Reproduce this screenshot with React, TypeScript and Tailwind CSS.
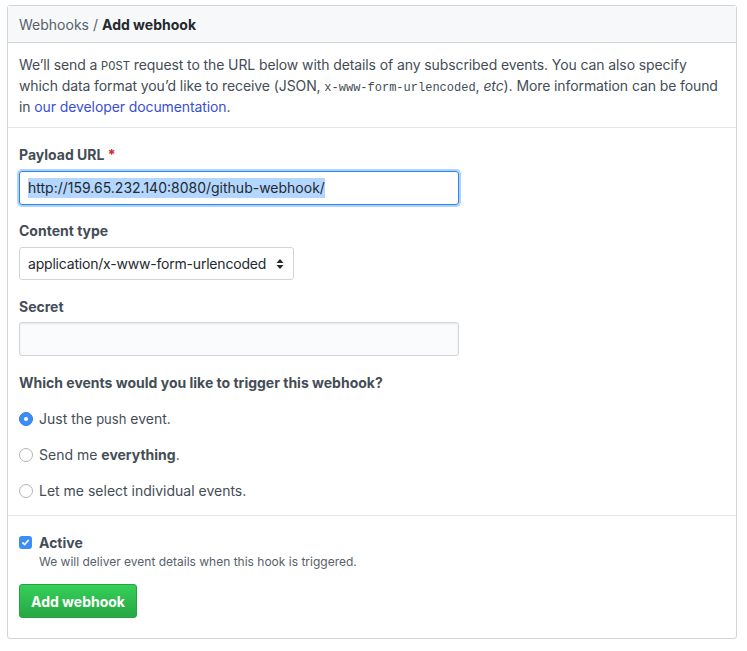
import React from 'react';

const font = { fontFamily: '"Inter", "Liberation Sans", Arial, sans-serif' };

function Radio({ checked }: { checked?: boolean }) {
  if (checked) {
    return (
      <span className="w-[14px] h-[14px] rounded-full bg-[#3b8ef5] border border-[#2f7de6] flex items-center justify-center shrink-0">
        <span className="w-[4px] h-[4px] rounded-full bg-white" />
      </span>
    );
  }
  return <span className="w-[14px] h-[14px] rounded-full bg-white border border-[#b5b5b5] shrink-0" />;
}

export default function App() {
  return (
    <div className="min-h-screen bg-white pt-[5px] pl-[7px]" style={font}>
      <div className="w-[730px] border border-[#d1d5da] rounded-[3px] text-[14px] text-[#24292e]">
        <div className="h-[37px] bg-[#f6f8fa] border-b border-[#d1d5da] px-[11px] flex items-center">
          <span className="text-[#586069]">Webhooks</span>
          <span className="text-[#586069] mx-[4px]">/</span>
          <span className="font-bold">Add webhook</span>
        </div>

        <p className="px-[11px] pt-[11px] pb-[10px] leading-[21px] text-[#444d56] border-b border-[#e1e4e8] whitespace-nowrap tracking-[-0.1px]">
          We’ll send a <code className="text-[12px] leading-none tracking-normal font-['Liberation_Mono',monospace]">POST</code> request to the URL below with details of any subscribed events. You can also specify
          <br />
          which data format you’d like to receive (JSON, <code className="text-[12px] leading-none tracking-normal font-['Liberation_Mono',monospace]">x-www-form-urlencoded</code>, <em>etc</em>). More information can be found
          <br />
          in <a className="text-[#3b4fd3]">our developer documentation</a>.
        </p>

        <div className="px-[11px] pt-[16px] pb-[14px] border-b border-[#e1e4e8]">
          <div className="font-bold leading-[21px] text-[#444d56]">
            Payload URL <span className="text-[#cb2431]">*</span>
          </div>
          <div className="mt-[6px] w-[440px] h-[34px] rounded-[3px] border border-[#2188ff] shadow-[0_0_0_2px_rgba(3,102,214,0.3)] flex items-center px-[8px]">
            <span className="bg-[#b3d7fe] leading-[20px] text-[#24292e]">http://159.65.232.140:8080/github-webhook/</span>
          </div>

          <div className="mt-[15px] font-bold leading-[21px] text-[#444d56]">Content type</div>
          <div className="mt-[6px] w-[275px] h-[33px] rounded-[3px] border border-[#d1d5da] bg-white flex items-center justify-between pl-[8px] pr-[9px]">
            <span className="tracking-[-0.2px]">application/x-www-form-urlencoded</span>
            <svg width="8" height="12" viewBox="0 0 8 12">
              <path d="M4 1 L7.5 5 H0.5 Z" fill="#24292e" />
              <path d="M4 11 L7.5 7 H0.5 Z" fill="#24292e" />
            </svg>
          </div>

          <div className="mt-[16px] font-bold leading-[21px] text-[#444d56]">Secret</div>
          <div className="mt-[5px] w-[440px] h-[34px] rounded-[3px] border border-[#d1d5da] bg-[#fafbfc] shadow-[inset_0_1px_2px_rgba(27,31,35,0.075)]" />

          <div className="mt-[16px] font-bold leading-[21px] text-[#444d56]">Which events would you like to trigger this webhook?</div>

          <div className="mt-[15px] flex flex-col gap-[15px]">
            <label className="flex items-center gap-[6px] h-[21px] text-[#444d56]">
              <Radio checked />
              <span>
                Just the <span className="text-[13px]">push</span> event.
              </span>
            </label>
            <label className="flex items-center gap-[6px] h-[21px] text-[#444d56]">
              <Radio />
              <span>
                Send me <span className="font-bold">everything</span>.
              </span>
            </label>
            <label className="flex items-center gap-[6px] h-[21px] text-[#444d56]">
              <Radio />
              <span>Let me select individual events.</span>
            </label>
          </div>
        </div>

        <div className="px-[11px] pt-[16px] pb-[20px]">
          <div className="flex items-start gap-[7px]">
            <span className="mt-[4px] w-[13px] h-[13px] rounded-[3px] bg-[#3b8ef5] flex items-center justify-center shrink-0">
              <svg width="9" height="9" viewBox="0 0 9 9">
                <path d="M1.8 4.8 L3.7 6.6 L7.2 2.4" stroke="white" strokeWidth="1.6" fill="none" strokeLinecap="round" strokeLinejoin="round" />
              </svg>
            </span>
            <div>
              <div className="font-bold leading-[21px] text-[#444d56]">Active</div>
              <div className="text-[12px] leading-[17px] text-[#586069]">We will deliver event details when this hook is triggered.</div>
            </div>
          </div>
          <button className="mt-[14px] h-[34px] px-[11px] rounded-[3px] border border-[#23a344] bg-gradient-to-b from-[#34d058] to-[#28a745] text-white font-bold text-[14px]">
            Add webhook
          </button>
        </div>
      </div>
    </div>
  );
}
